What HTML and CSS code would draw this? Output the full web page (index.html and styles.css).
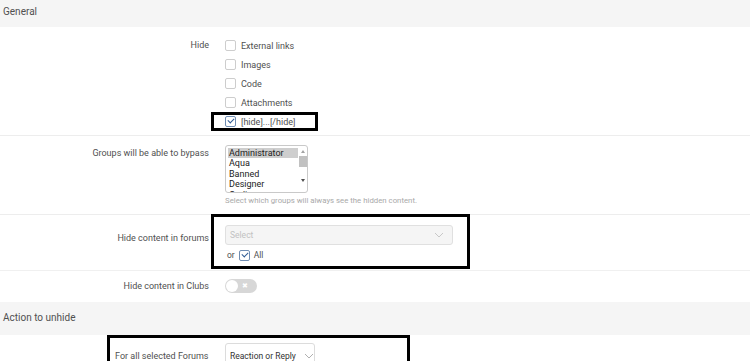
FILE: index.html
```html
<!DOCTYPE html>
<html lang="en">
<head>
  <meta charset="UTF-8">
  <title>Hide options</title>
  <link rel="stylesheet" href="styles.css">
</head>
<body>
  <div class="block-header">General</div>

  <div class="row row-hide">
    <div class="row-label">Hide</div>
    <div class="row-input">
      <ul class="check-list">
        <li><span class="check"></span>External links</li>
        <li><span class="check"></span>Images</li>
        <li><span class="check"></span>Code</li>
        <li><span class="check"></span>Attachments</li>
        <li class="marked"><span class="check checked"></span>[hide]...[/hide]</li>
      </ul>
    </div>
  </div>

  <div class="row row-groups">
    <div class="row-label">Groups will be able to bypass</div>
    <div class="row-input">
      <div class="listbox">
        <ul class="listbox-items">
          <li class="selected">Administrator</li>
          <li>Aqua</li>
          <li>Banned</li>
          <li>Designer</li>
          <li>Coding</li>
        </ul>
        <div class="scrollbar">
          <span class="arrow up"></span>
          <span class="thumb"></span>
          <span class="arrow down"></span>
        </div>
      </div>
      <div class="hint">Select which groups will always see the hidden content.</div>
    </div>
  </div>

  <div class="row row-forums">
    <div class="row-label">Hide content in forums</div>
    <div class="row-input">
      <div class="marked-box">
        <div class="select-input">
          <span class="placeholder">Select</span>
          <svg class="chevron" width="10" height="6" viewBox="0 0 10 6"><path d="M1 1l4 4 4-4" fill="none" stroke="#c8c8c8" stroke-width="1"/></svg>
        </div>
        <div class="or-all">or <span class="check checked"></span>All</div>
      </div>
    </div>
  </div>

  <div class="row row-clubs">
    <div class="row-label">Hide content in Clubs</div>
    <div class="row-input">
      <span class="toggle"><span class="knob"></span><span class="cross">&#x2716;</span></span>
    </div>
  </div>

  <div class="block-header second">Action to unhide</div>

  <div class="row row-action">
    <div class="marked-wide">
      <div class="row-label">For all selected Forums</div>
      <div class="row-input">
        <div class="small-select">Reaction or Reply
          <svg class="chevron" width="10" height="6" viewBox="0 0 10 6"><path d="M1 1l4 4 4-4" fill="none" stroke="#b0b0b0" stroke-width="1"/></svg>
        </div>
      </div>
    </div>
  </div>
</body>
</html>
```

FILE: styles.css
```css
body {
  margin: 0;
  font-family: Roboto, "Liberation Sans", sans-serif;
  font-size: 9px;
  color: #505050;
  background-color: #fff;
  overflow: hidden;
}

.block-header {
  height: 27px;
  box-sizing: border-box;
  padding: 4px 3px 0;
  line-height: 16px;
  font-size: 10px;
  background-color: #f5f5f5;
  color: #505050;
}

.block-header.second {
  height: 33px;
  padding-top: 8px;
}

.row {
  display: flex;
  border-bottom: 1px solid #ededed;
}

.row-label {
  flex: 0 0 209px;
  text-align: right;
}

.row-input {
  flex: 1;
  padding-left: 16px;
}

/* Hide */
.row-hide {
  height: 109px;
  box-sizing: border-box;
  padding-top: 9px;
}

.row-hide .row-label {
  line-height: 19px;
}

.check-list {
  list-style: none;
  margin: 0;
  padding: 0;
}

.check-list li {
  height: 19px;
  display: flex;
  align-items: center;
}

.check {
  display: inline-block;
  width: 9px;
  height: 9px;
  border: 1px solid #cdcdcd;
  border-radius: 2px;
  margin-right: 5px;
  position: relative;
  background: #fff;
}

.check.checked {
  border-color: #6f8db3;
}

.check.checked::after {
  content: "";
  position: absolute;
  left: 2px;
  top: 1px;
  width: 5px;
  height: 3px;
  border-left: 1.5px solid #2f5b93;
  border-bottom: 1.5px solid #2f5b93;
  transform: rotate(-45deg);
}

.check-list li.marked {
  margin-left: -14px;
  width: 107px;
  box-sizing: border-box;
  padding-left: 11px;
  border: 3px solid #000;
}

/* Groups */
.row-groups {
  height: 79px;
  box-sizing: border-box;
  padding-top: 9px;
}

.row-groups .row-label {
  line-height: 16px;
}

.listbox {
  display: flex;
  width: 83px;
  height: 48px;
  box-sizing: border-box;
  border: 1px solid #c9c9c9;
  border-radius: 3px;
  overflow: hidden;
  background: #fff;
}

.listbox-items {
  list-style: none;
  margin: 0;
  padding: 2px 0 0 2px;
  flex: 1;
  font-size: 9px;
  line-height: 10.4px;
  color: #222;
}

.listbox-items li {
  padding-left: 1px;
}

.listbox-items li.selected {
  background: #cecece;
}

.scrollbar {
  width: 9px;
  display: flex;
  flex-direction: column;
  align-items: center;
  padding-top: 2px;
}

.arrow {
  width: 0;
  height: 0;
  border-left: 2.5px solid transparent;
  border-right: 2.5px solid transparent;
}

.arrow.up {
  border-bottom: 3px solid #a3a3a3;
  margin-top: 2px;
}

.arrow.down {
  border-top: 3px solid #505050;
  margin-top: 12px;
}

.thumb {
  width: 8px;
  height: 11px;
  margin-top: 3px;
  background: #c1c1c1;
}

.hint {
  margin-top: 3px;
  font-size: 7.8px;
  line-height: 10px;
  color: #a9a9a9;
}

/* Forums */
.row-forums {
  height: 56px;
  box-sizing: border-box;
  border-bottom-color: #f0f0f0;
}

.row-forums .row-label {
  padding-top: 15px;
  line-height: 16px;
}

.marked-box {
  margin: -1px 0 0 -14px;
  width: 259px;
  height: 55px;
  box-sizing: border-box;
  border: 3px solid #000;
  padding: 8px 0 0 11px;
}

.select-input {
  display: flex;
  align-items: center;
  justify-content: space-between;
  width: 228px;
  height: 20px;
  box-sizing: border-box;
  padding: 0 8px 0 4px;
  border: 1px solid #e0e0e0;
  border-radius: 3px;
  background: #f5f5f5;
}

.placeholder {
  color: #c2c2c2;
  font-size: 8.5px;
}

.or-all {
  display: flex;
  align-items: center;
  height: 14px;
  margin-top: 3px;
  padding-left: 2px;
  font-size: 8.5px;
}

.or-all .check {
  margin: 0 4px 0 4px;
  width: 9px;
  height: 9px;
}

/* Clubs */
.row-clubs {
  height: 31px;
  box-sizing: border-box;
  padding-top: 7px;
  border-bottom: none;
}

.row-clubs .row-label {
  line-height: 16px;
}

.toggle {
  display: inline-flex;
  align-items: center;
  width: 32px;
  height: 14px;
  margin-top: 1px;
  box-sizing: border-box;
  border-radius: 7px;
  background: #d7d7d7;
  padding-left: 1px;
}

.knob {
  width: 12px;
  height: 12px;
  border-radius: 50%;
  background: #fff;
}

.cross {
  color: #fff;
  font-size: 7px;
  margin-left: 4px;
  line-height: 1;
}

/* Action */
.row-action {
  border-bottom: none;
}

.marked-wide {
  display: flex;
  margin-left: 107px;
  width: 303px;
  height: 30px;
  box-sizing: border-box;
  border: 3px solid #000;
  border-bottom: none;
  padding-top: 5px;
}

.marked-wide .row-label {
  flex: 0 0 99px;
  text-align: left;
  padding-left: 5px;
  padding-top: 5px;
  line-height: 16px;
}

.marked-wide .row-input {
  padding-left: 11px;
}

.small-select {
  display: inline-flex;
  align-items: center;
  width: 90px;
  height: 22px;
  box-sizing: border-box;
  padding: 3px 0 0 4px;
  border: 1px solid #dcdcdc;
  border-radius: 3px;
  font-size: 8.5px;
  color: #333;
}

.small-select .chevron {
  margin-left: 8px;
}
```
